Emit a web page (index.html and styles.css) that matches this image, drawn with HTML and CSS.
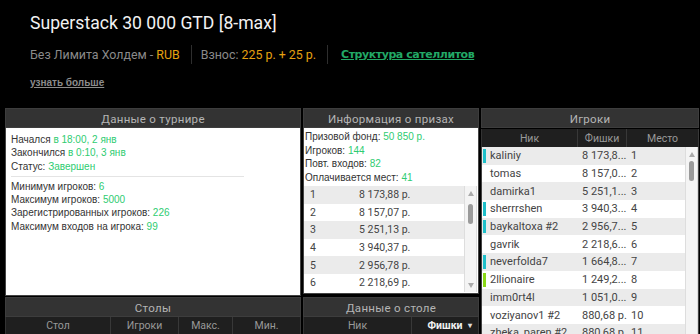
FILE: index.html
```html
<!DOCTYPE html>
<html lang="ru">
<head>
<meta charset="utf-8">
<title>Superstack 30 000 GTD [8-max]</title>
<link rel="stylesheet" href="styles.css">
</head>
<body>
<header class="top">
  <h1 class="title">Superstack 30 000 GTD [8-max]</h1>
  <div class="meta">
    <span class="meta-item">Без Лимита Холдем - <b class="orange">RUB</b></span>
    <span class="sep"></span>
    <span class="meta-item">Взнос: <b class="orange">225 р. + 25 р.</b></span>
    <span class="sep"></span>
    <a class="sat-link" href="#">Структура сателлитов</a>
  </div>
  <a class="more" href="#">узнать больше</a>
</header>

<main class="grid">
  <div class="col col-left">
    <section class="panel">
      <div class="phead">Данные о турнире</div>
      <div class="pbody info-body">
        <p>Начался <span class="g">в 18:00, 2 янв</span></p>
        <p>Закончился <span class="g">в 0:10, 3 янв</span></p>
        <p>Статус: <span class="g">Завершен</span></p>
        <hr class="divider">
        <p>Минимум игроков: <span class="g">6</span></p>
        <p>Максимум игроков: <span class="g">5000</span></p>
        <p>Зарегистрированных игроков: <span class="g">226</span></p>
        <p>Максимум входов на игрока: <span class="g">99</span></p>
      </div>
    </section>
    <section class="panel panel-low">
      <div class="phead">Столы</div>
      <div class="thead thead-tables">
        <span>Стол</span><span>Игроки</span><span>Макс.</span><span>Мин.</span>
      </div>
    </section>
  </div>

  <div class="col col-mid">
    <section class="panel">
      <div class="phead">Информация о призах</div>
      <div class="pbody prize-body">
        <div class="prize-info">
          <p>Призовой фонд: <span class="g">50 850 р.</span></p>
          <p>Игроков: <span class="g">144</span></p>
          <p>Повт. входов: <span class="g">82</span></p>
          <p>Оплачивается мест: <span class="g">41</span></p>
        </div>
        <div class="scroll-area">
          <div class="rows prize-rows">
            <div class="row"><span class="c-num">1</span><span>8 173,88 р.</span></div>
            <div class="row"><span class="c-num">2</span><span>8 157,07 р.</span></div>
            <div class="row"><span class="c-num">3</span><span>5 251,13 р.</span></div>
            <div class="row"><span class="c-num">4</span><span>3 940,37 р.</span></div>
            <div class="row"><span class="c-num">5</span><span>2 956,78 р.</span></div>
            <div class="row"><span class="c-num">6</span><span>2 218,69 р.</span></div>
          </div>
          <div class="scrollbar sb-mid">
            <span class="arr up"></span>
            <span class="thumb"></span>
            <span class="arr down"></span>
          </div>
        </div>
      </div>
    </section>
    <section class="panel panel-low">
      <div class="phead">Данные о столе</div>
      <div class="thead thead-table">
        <span>Ник</span><span class="active">Фишки <i class="caret">▾</i></span>
      </div>
    </section>
  </div>

  <div class="col col-right">
    <section class="panel">
      <div class="phead">Игроки</div>
      <div class="thead thead-players">
        <span>Ник</span><span>Фишки</span><span>Место</span>
      </div>
      <div class="scroll-area players-area">
        <div class="rows player-rows">
          <div class="row"><span class="c-nick mark-teal">kaliniy</span><span class="c-chips">8 173,8...</span><span class="c-place">1</span></div>
          <div class="row"><span class="c-nick">tomas</span><span class="c-chips">8 157,0...</span><span class="c-place">2</span></div>
          <div class="row"><span class="c-nick">damirka1</span><span class="c-chips">5 251,1...</span><span class="c-place">3</span></div>
          <div class="row"><span class="c-nick mark-teal">sherrrshen</span><span class="c-chips">3 940,3...</span><span class="c-place">4</span></div>
          <div class="row"><span class="c-nick mark-teal">baykaltoxa #2</span><span class="c-chips">2 956,7...</span><span class="c-place">5</span></div>
          <div class="row"><span class="c-nick">gavrik</span><span class="c-chips">2 218,6...</span><span class="c-place">6</span></div>
          <div class="row"><span class="c-nick mark-teal">neverfolda7</span><span class="c-chips">1 664,8...</span><span class="c-place">7</span></div>
          <div class="row"><span class="c-nick mark-lime">2llionaire</span><span class="c-chips">1 249,2...</span><span class="c-place">8</span></div>
          <div class="row"><span class="c-nick">imm0rt4l</span><span class="c-chips">1 051,0...</span><span class="c-place">9</span></div>
          <div class="row"><span class="c-nick">voziyanov1 #2</span><span class="c-chips">880,68 р.</span><span class="c-place">10</span></div>
          <div class="row"><span class="c-nick">zheka_paren #2</span><span class="c-chips">880,68 р.</span><span class="c-place">11</span></div>
        </div>
        <div class="scrollbar sb-right">
          <span class="arr up"></span>
          <span class="thumb"></span>
        </div>
      </div>
    </section>
  </div>
</main>
</body>
</html>
```

FILE: styles.css
```css
* { box-sizing: border-box; }
html, body { margin: 0; padding: 0; }
body {
  width: 700px;
  height: 334px;
  overflow: hidden;
  background: #000;
  font-family: Roboto, "Liberation Sans", Arial, sans-serif;
  color: #999;
}
p { margin: 0; }

.top { padding: 12px 0 0 30px; height: 108px; }
.title {
  margin: 0;
  font-weight: 400;
  font-size: 17.6px;
  line-height: 22px;
  color: #f2f2f2;
}
.meta {
  display: flex;
  align-items: center;
  margin-top: 10px;
  height: 20px;
  font-size: 12.4px;
  color: #8a8a8a;
}
.meta b { font-weight: 400; }
.orange { color: #e5a010; }
.sep {
  width: 1px;
  height: 19px;
  background: #2e2e2e;
  margin: 0 9px 0 11px;
}
.meta-item { white-space: nowrap; }
.sat-link {
  margin-left: 4px;
  font-family: "DejaVu Sans", sans-serif;
  font-weight: 700;
  font-size: 11px;
  letter-spacing: -0.45px;
  color: #22a866;
  text-decoration: underline;
}
.more {
  display: inline-block;
  margin-top: 13px;
  font-family: "Liberation Sans", Arial, sans-serif;
  font-size: 10px;
  font-weight: 700;
  color: #8c8c8c;
  text-decoration: underline;
}

.grid {
  display: grid;
  grid-template-columns: 296px 176px 218px;
  column-gap: 2px;
  padding-left: 5px;
}
.col { display: flex; flex-direction: column; }
.panel { display: flex; flex-direction: column; }
.panel-low { margin-top: 1px; }
.col-mid .panel-low { margin-top: 3px; }

.phead {
  height: 20px;
  line-height: 20px;
  text-align: center;
  background: #333;
  border: 1px solid #3d3d3d;
  color: #b5b5b5;
  font-size: 11.5px;
  letter-spacing: 0.3px;
}
.pbody {
  background: #fff;
  border: 1px solid #444;
  border-top: none;
  font-family: "Liberation Sans", Arial, sans-serif;
  font-size: 10px;
  color: #333;
}
.g { color: #2ecc71; }

.info-body {
  height: 168px;
  padding: 5px 4px 0 5px;
}
.info-body p { line-height: 13.3px; }
.divider {
  border: none;
  border-top: 1px solid #e4e4e4;
  margin: 3px 52px 3px 0;
}

.prize-body {
  height: 166px;
  padding: 0;
  display: flex;
  flex-direction: column;
}
.prize-info { padding: 2px 0 0 1px; height: 58px; }
.prize-info p { line-height: 13.5px; }

.scroll-area { display: flex; }
.rows { flex: 1; }
.row { display: flex; align-items: center; }
.row:nth-child(odd) { background: #ebebeb; }
.row:nth-child(even) { background: #fff; }

.prize-rows .row {
  height: 17.6px;
  font-family: Roboto, sans-serif;
  font-size: 10.5px;
  color: #444;
}
.c-num { width: 55px; padding-left: 6px; }

.scrollbar {
  width: 13px;
  background: #f4f4f4;
  border-left: 1px solid #ddd;
  border-right: 1px solid #ddd;
  display: flex;
  flex-direction: column;
  align-items: center;
}
.sb-mid { height: 106px; margin-right: 1px; }
.arr {
  width: 0;
  height: 0;
  border-left: 3px solid transparent;
  border-right: 3px solid transparent;
}
.arr.up { border-bottom: 5px solid #aaa; margin-top: 5px; }
.arr.down { border-top: 5px solid #aaa; margin-top: auto; margin-bottom: 4px; }
.thumb {
  width: 5px;
  height: 20px;
  background: #9a9a9a;
  border-radius: 3px;
  margin-top: 8px;
}

.thead {
  display: flex;
  height: 17px;
  background: #1f1f1f;
  border-left: 1px solid #333;
  font-size: 10.5px;
  color: #999;
}
.thead span {
  display: flex;
  align-items: center;
  justify-content: center;
  border-right: 1px solid #383838;
}
.thead-tables span:nth-child(1) { width: 105px; }
.thead-tables span:nth-child(2) { width: 68px; }
.thead-tables span:nth-child(3) { width: 54px; }
.thead-tables span:nth-child(4) { flex: 1; }
.thead-table span:nth-child(1) { width: 108px; }
.thead-table span:nth-child(2) { flex: 1; }
.thead .active { color: #f0f0f0; font-weight: 700; position: relative; }
.caret {
  position: absolute;
  right: 6px;
  font-style: normal;
  font-size: 8px;
  color: #ddd;
}
.thead-players { margin-top: 1px; height: 18px; }
.thead-players span:nth-child(1) { width: 96px; }
.thead-players span:nth-child(2) { width: 49px; }
.thead-players span:nth-child(3) { flex: 1; }

.players-area {
  background: #fff;
  border-left: 1px solid #444;
  border-right: 1px solid #444;
}
.player-rows .row {
  height: 17.7px;
  font-family: Roboto, sans-serif;
  font-size: 11px;
  color: #444;
}
.c-nick {
  width: 95px;
  padding-left: 8px;
  height: 100%;
  display: flex;
  align-items: center;
  position: relative;
  white-space: nowrap;
}
.mark-teal::before, .mark-lime::before {
  content: "";
  position: absolute;
  left: 1px;
  top: 2px;
  bottom: 2px;
  width: 3px;
}
.mark-teal::before { background: #1fbfc9; }
.mark-lime::before { background: #8ad817; }
.c-chips { width: 49px; padding-left: 5px; white-space: nowrap; }
.c-place { flex: 1; padding-left: 5px; }
.sb-right { height: 190px; }
.sb-right .thumb { margin-top: 4px; }
```
